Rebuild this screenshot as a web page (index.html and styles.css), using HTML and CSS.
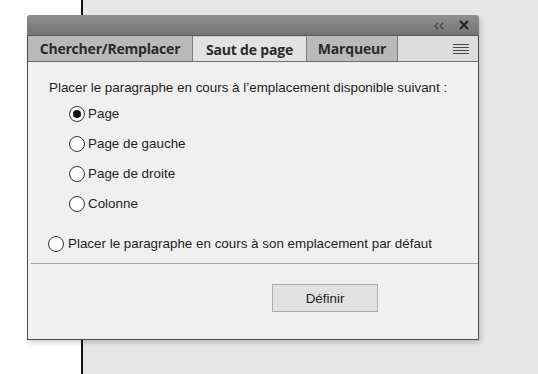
FILE: index.html
```html
<!DOCTYPE html>
<html lang="fr">
<head>
  <meta charset="UTF-8">
  <title>Saut de page</title>
  <link rel="stylesheet" href="styles.css">
</head>
<body>

  <!-- Document behind the panel -->
  <div class="desk">
    <div class="margin-area"></div>
    <div class="page-area"></div>
  </div>

  <!-- Floating panel -->
  <div class="panel">
    <div class="titlebar">
      <svg class="collapse" width="10" height="8" viewBox="0 0 10 8">
        <path d="M4 1 L1 4 L4 7 M9 1 L6 4 L9 7" fill="none" stroke="#444" stroke-width="1.2"/>
      </svg>
      <svg class="close" width="10" height="10" viewBox="0 0 10 10">
        <path d="M1 1 L9 9 M9 1 L1 9" fill="none" stroke="#222" stroke-width="2"/>
      </svg>
    </div>

    <div class="tabs">
      <div class="tab tab-find">Chercher/Remplacer</div>
      <div class="tab tab-break active">Saut de page</div>
      <div class="tab tab-marker">Marqueur</div>
      <div class="tab-fill">
        <svg width="16" height="10" viewBox="0 0 16 10">
          <path d="M0 0.5 H16 M0 3.5 H16 M0 6.5 H16 M0 9.5 H16" stroke="#4a4a4a" stroke-width="1"/>
        </svg>
      </div>
    </div>

    <div class="content">
      <p class="intro">Placer le paragraphe en cours à l’emplacement disponible suivant :</p>
      <div class="options">
        <label class="option"><input type="radio" name="where" checked> Page</label>
        <label class="option"><input type="radio" name="where"> Page de gauche</label>
        <label class="option"><input type="radio" name="where"> Page de droite</label>
        <label class="option"><input type="radio" name="where"> Colonne</label>
      </div>
      <label class="option default"><input type="radio" name="where"> Placer le paragraphe en cours à son emplacement par défaut</label>
    </div>

    <div class="footer">
      <button class="btn">Définir</button>
    </div>
  </div>

</body>
</html>
```

FILE: styles.css
```css
* {
  box-sizing: border-box;
}

body {
  margin: 0;
  height: 374px;
  overflow: hidden;
  font-family: 'Liberation Sans', Arial, sans-serif;
  font-size: 13.4px;
  color: #1e1e1e;
}

.desk {
  display: flex;
  height: 100%;
}

.margin-area {
  width: 81px;
  background: #fff;
}

.page-area {
  flex: 1;
  background: #e6e6e6;
  border-left: 2px solid #111;
}

.panel {
  position: absolute;
  left: 27px;
  top: 15px;
  width: 452px;
  height: 325px;
  background: #f0f0f0;
  border: 1px solid #4d4d4d;
  border-top: none;
  border-radius: 4px 4px 0 0;
  box-shadow: 2px 3px 5px rgba(0, 0, 0, 0.18);
  display: flex;
  flex-direction: column;
}

.titlebar {
  height: 21px;
  background: linear-gradient(#8f8f8f, #737373);
  border-bottom: 1px solid #5a5a5a;
  border-radius: 4px 4px 0 0;
  margin: 0 -1px;
  display: flex;
  align-items: center;
  justify-content: flex-end;
  padding-right: 10px;
}

.collapse {
  margin-right: 15px;
  margin-top: 2px;
}

.tabs {
  display: flex;
  height: 26px;
  border-bottom: 1px solid #6e6e6e;
  background: #dcdcdc;
}

.tab {
  display: flex;
  align-items: center;
  justify-content: center;
  background: #b9b9b9;
  border-right: 1px solid #7e7e7e;
  font-family: 'Open Sans', 'Liberation Sans', sans-serif;
  font-weight: bold;
  font-size: 14px;
  letter-spacing: -0.2px;
  color: #2a2a2a;
}

.tab.active {
  background: #e2e2e2;
  border-top: 1px solid #c8c8c8;
}

.tab-find {
  width: 165px;
}

.tab-break {
  width: 114px;
}

.tab-marker {
  width: 91px;
}

.tab-fill {
  flex: 1;
  display: flex;
  align-items: center;
  justify-content: flex-end;
  padding-right: 9px;
  padding-top: 1px;
}

.content {
  padding: 18px 0 0 18px;
  border-bottom: 1px solid #a8a8a8;
  margin: 0 0 0 3px;
  height: 202px;
}

.intro {
  margin: 0;
  line-height: 16px;
}

.options {
  display: flex;
  flex-direction: column;
  gap: 14px;
  padding: 10px 0 0 20px;
}

.option {
  display: flex;
  align-items: center;
  gap: 3px;
  line-height: 16px;
}

.option input {
  appearance: none;
  margin: 0;
  width: 16px;
  height: 16px;
  border: 1px solid #333;
  border-radius: 50%;
  background: #fff;
  display: grid;
  place-items: center;
}

.option input:checked::after {
  content: '';
  width: 8px;
  height: 8px;
  border-radius: 50%;
  background: #111;
}

.default {
  margin-top: 24px;
  margin-left: -1px;
  gap: 4px;
}

.footer {
  display: flex;
  justify-content: flex-end;
  padding: 20px 100px 0 0;
}

.btn {
  width: 106px;
  height: 28px;
  background: #e1e1e1;
  border: 1px solid #adadad;
  font-family: 'Liberation Sans', Arial, sans-serif;
  font-size: 13.4px;
  color: #1e1e1e;
}
```
